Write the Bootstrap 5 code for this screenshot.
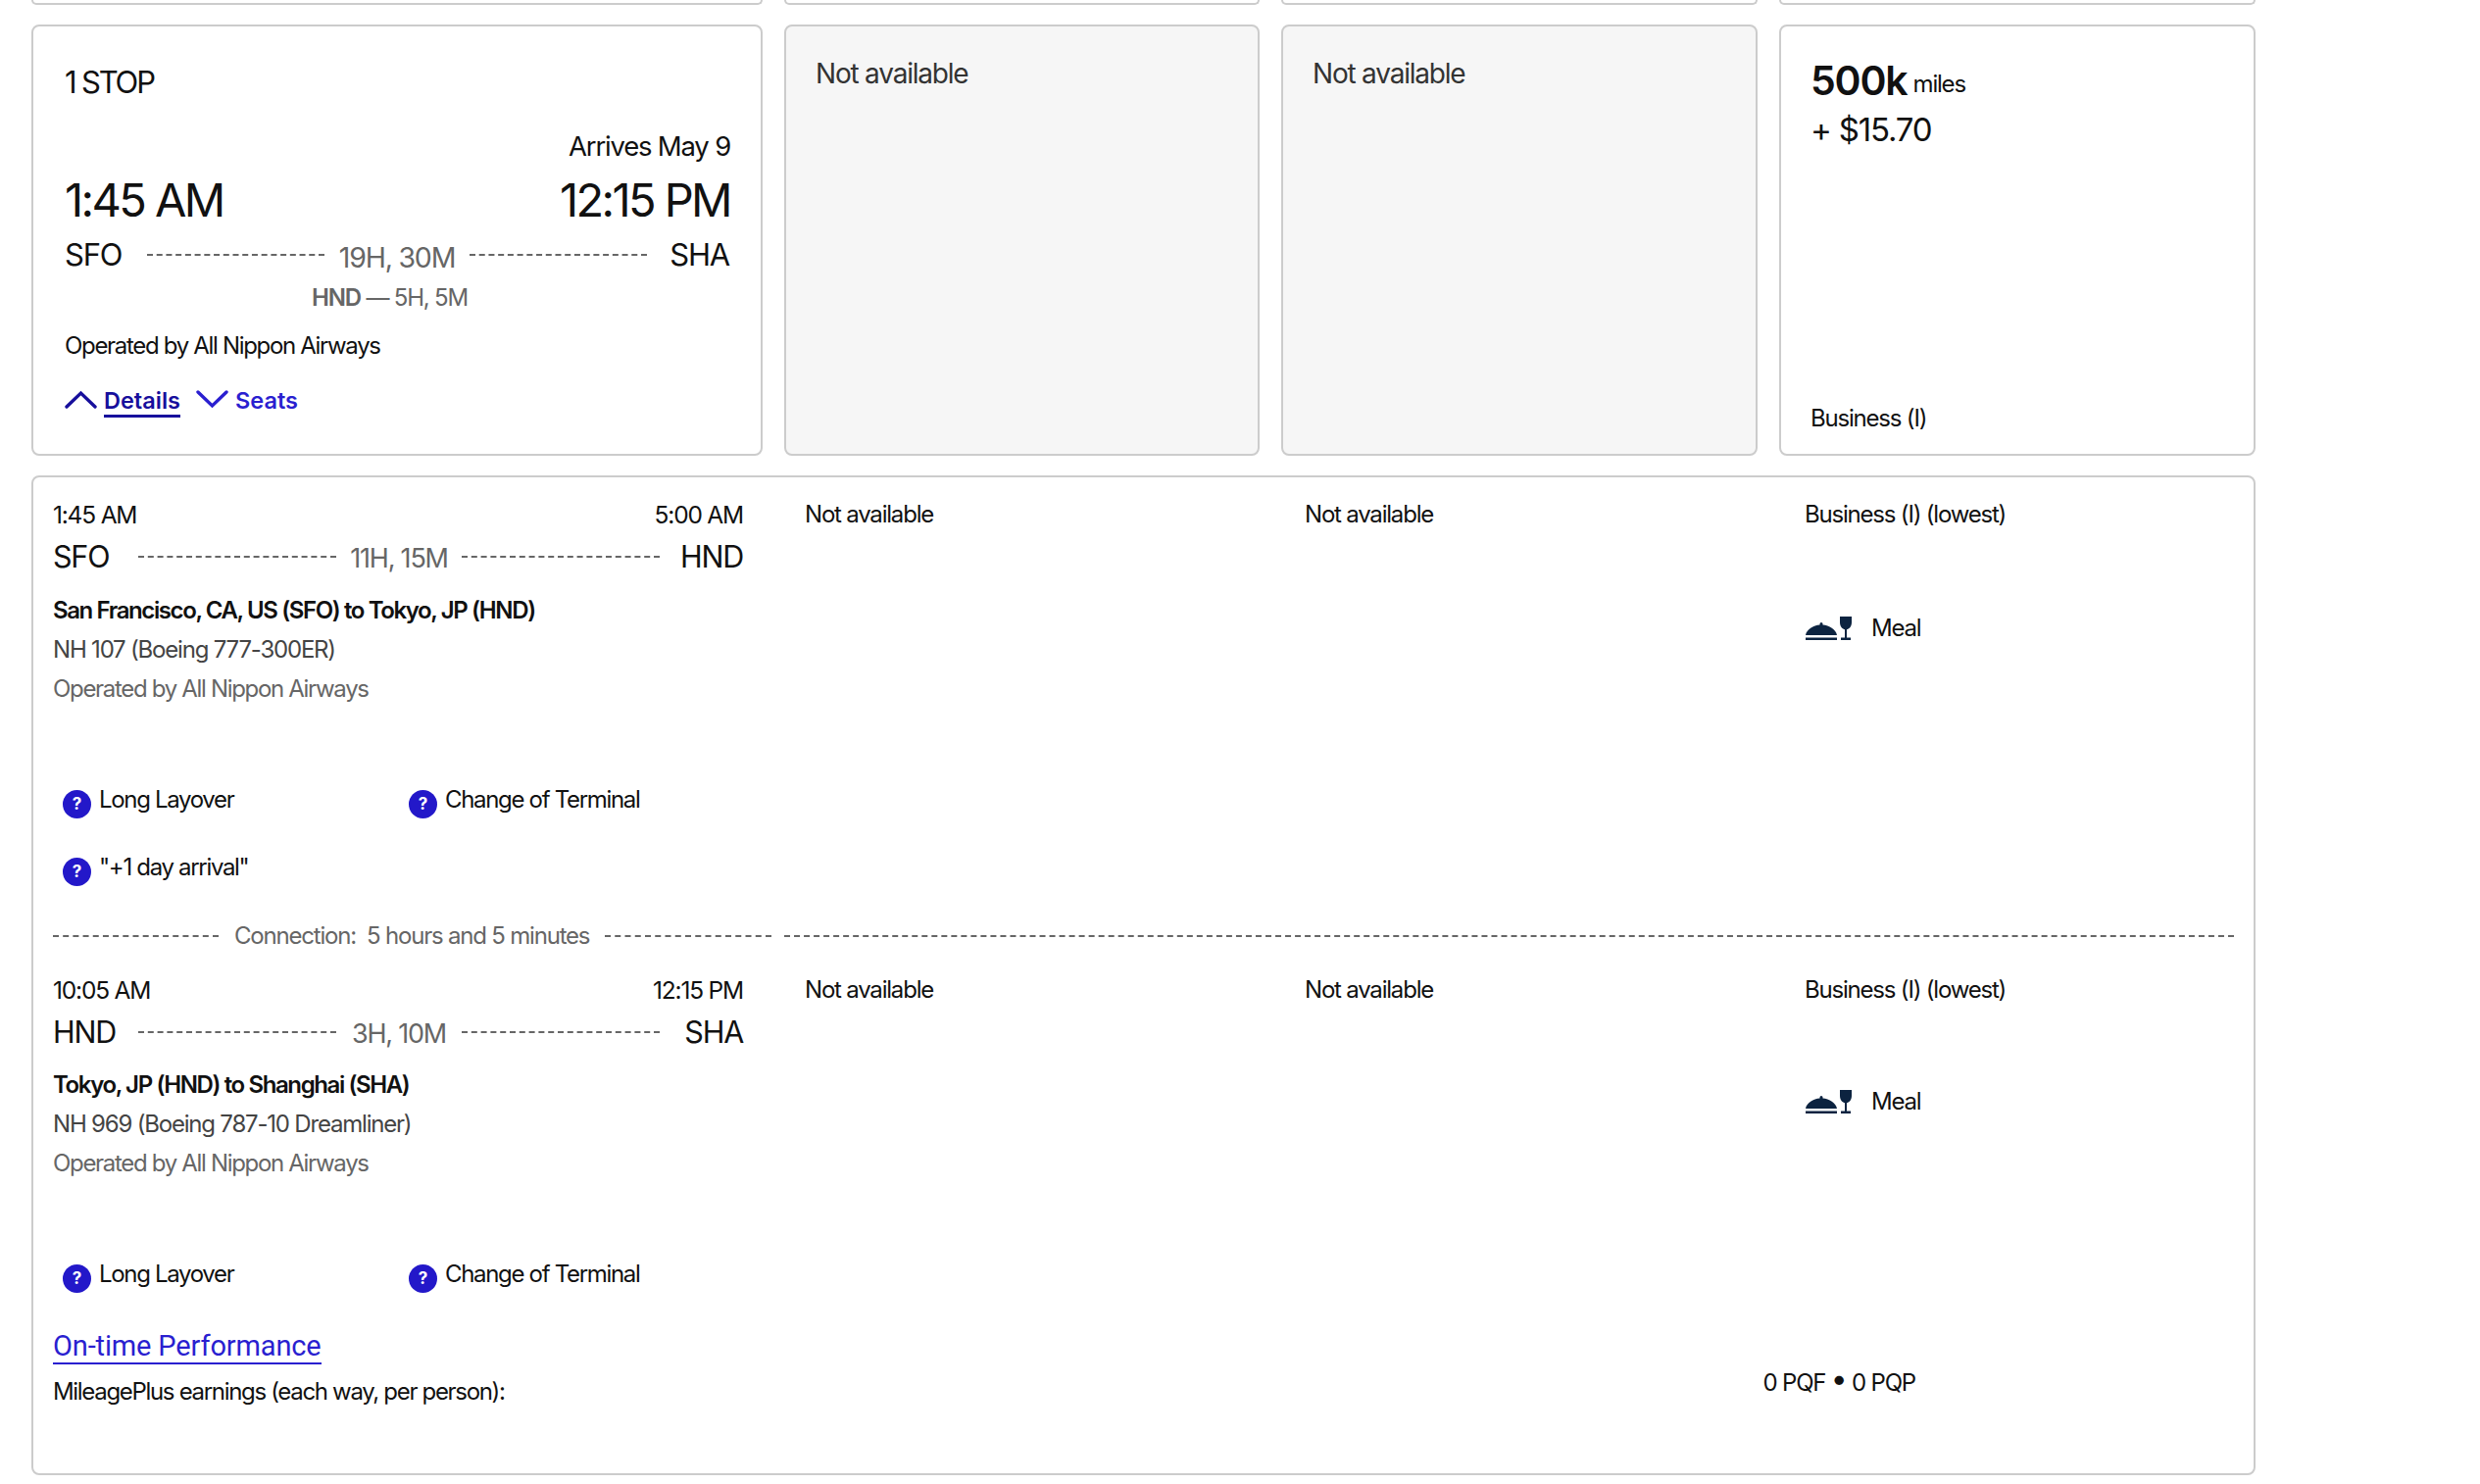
<!DOCTYPE html>
<html lang="en">
<head>
<meta charset="utf-8">
<title>Flight details</title>
<link href="https://cdn.jsdelivr.net/npm/bootstrap@5.3.0/dist/css/bootstrap.min.css" rel="stylesheet">
<style>
body{background:#fff;color:#111;font-family:Inter,"Liberation Sans",sans-serif;font-size:24px;letter-spacing:-.05em;padding:0 0 0 32px;overflow:hidden;line-height:30px}
.fare-grid{display:grid;grid-template-columns:746px 485px 486px 486px;gap:22px;width:2269px}
.fare-main{margin-top:20px}
.stub{height:5px;border:2px solid #ccc;border-top:0;border-radius:0 0 8px 8px}
.tile{height:440px;border:2px solid #ccc;border-radius:8px;background:#fff}
.tile-main{padding:37px 31px 0 32px}
.tile-off{background:#f6f6f6;padding:28px 30px;color:#333;font-size:28px;line-height:40px}
.tile-price{padding:28px 30px 0;justify-content:space-between}
.stop-label{font-size:31px;line-height:40px;letter-spacing:-.07em}
.arrives{font-size:27.500px;line-height:40px;margin-top:25px;text-align:right}
.big-times{font-size:47px;line-height:60px;margin-top:5px;letter-spacing:-.055em}
.route-big{font-size:31px;line-height:40px;margin-top:3px;display:grid;grid-template-columns:84px 181px 148px 181px 84px;align-items:center}
.dash{border-top:2px dashed #666}
.dash-fill{flex:1 1 0}
.dur{color:#666;font-size:28.500px;padding-top:6px;text-align:center}
.via{color:#666;font-size:24px;line-height:30px;margin:6px 0 0 252px}
.via b{font-weight:600}
.op-line{line-height:30px;margin-top:19px;letter-spacing:-.055em}
.links{margin-top:26px;line-height:30px;font-weight:600;font-size:23.500px;letter-spacing:0;gap:7px}
.links a{color:#2a1fd0;text-decoration:none}
.links a.on{color:#170f9c;border-bottom:3px solid #170f9c;height:32px}
.links svg{display:block;margin-top:4px}
.seats-link{margin-left:9px}
.miles-big{font-size:41px;line-height:46px;font-weight:600;margin-top:4px}
.miles-big small{font-size:24px;font-weight:400;margin-left:-3px;vertical-align:3px}
.cash{font-size:33px;line-height:40px;margin-top:3px}
.cabin{line-height:30px;margin-bottom:21px}
.detail-box{border:2px solid #ccc;border-radius:8px;width:2269px;height:1020px;margin-top:20px;padding:23px 0 0 20px}
.seg-grid{display:grid;grid-template-columns:767px 510px 510px 1fr}
.seg-left{padding-right:63px}
.seg-times{font-size:24.500px}
.seg-route{font-size:30.500px;line-height:40px;margin-top:6px;display:grid;grid-template-columns:87px 202px 128px 202px 85px;align-items:center}
.seg-route .dur{font-size:27px;padding-top:4px}
.seg-title{font-weight:600;line-height:40px;margin-top:12.500px;letter-spacing:-.058em}
.seg-plane{color:#444;line-height:40px}
.seg-op{color:#666;line-height:40px;letter-spacing:-.055em}
.flags{margin:78px 0 0 10px;display:grid;grid-template-columns:353px 1fr;row-gap:35px}
.flag{display:flex;gap:8px;letter-spacing:-.055em}
.qmark{width:29px;height:29px;background:#2318c9;color:#fff;font-size:17px;font-weight:700;line-height:1;margin-top:5px;letter-spacing:0}
.meal{margin-top:86px;gap:19px}
.meal svg{margin-left:1px}
.seg-two .meal{margin-top:84px}
.link-row{margin-top:35.500px;line-height:40px}
.ontime{font-family:Roboto,"Liberation Sans",sans-serif;font-size:29px;letter-spacing:-.005em;color:#2a1fd0;text-decoration:none;border-bottom:2px solid #2a1fd0;line-height:36px;display:inline-block;height:37px}
.earn-row{margin-top:10.500px;width:1900px;justify-content:space-between}
.earn-left{letter-spacing:-.055em}
.earn-right{margin-top:-11.500px}
.conn{margin:36px 0 8px;color:#666;height:30px;width:2225px}
.conn-a{flex:0 0 169px}
.conn-b{flex:0 0 170px;margin-right:13px}
.conn-txt{margin:0 16px;white-space:pre}
.seg-two{margin-top:25px}
.raised{font-size:30px;line-height:24px;vertical-align:2px}
</style>
</head>
<body>
<div class="fare-grid">
  <div class="stub"></div><div class="stub"></div><div class="stub"></div><div class="stub"></div>
</div>
<div class="fare-grid fare-main">
  <div class="card tile tile-main">
    <div class="stop-label">1 STOP</div>
    <div class="arrives">Arrives May 9</div>
    <div class="d-flex justify-content-between big-times"><span>1:45 AM</span><span>12:15 PM</span></div>
    <div class="route-big"><span>SFO</span><span class="dash"></span><span class="dur">19H, 30M</span><span class="dash"></span><span class="text-end">SHA</span></div>
    <div class="via"><b>HND</b> — 5H, 5M</div>
    <div class="op-line">Operated by All Nippon Airways</div>
    <div class="d-flex links">
      <svg width="33" height="19" viewBox="0 0 33 19"><path d="M2 17 16.500 3 31 17" fill="none" stroke="#170f9c" stroke-width="3.400" stroke-linecap="round"/></svg>
      <a class="on" href="#">Details</a>
      <svg class="seats-link" width="33" height="19" viewBox="0 0 33 19"><path d="M2 2 16.500 16 31 2" fill="none" stroke="#2a1fd0" stroke-width="3.400" stroke-linecap="round"/></svg>
      <a href="#">Seats</a>
    </div>
  </div>
  <div class="card tile tile-off">Not available</div>
  <div class="card tile tile-off">Not available</div>
  <div class="card tile tile-price">
    <div>
      <div class="miles-big">500k <small>miles</small></div>
      <div class="cash">+ $15.70</div>
    </div>
    <div class="cabin">Business (I)</div>
  </div>
</div>

<div class="detail-box">
  <div class="seg-grid">
    <div class="seg-left">
      <div class="d-flex justify-content-between seg-times"><span>1:45 AM</span><span>5:00 AM</span></div>
      <div class="seg-route"><span>SFO</span><span class="dash"></span><span class="dur">11H, 15M</span><span class="dash"></span><span class="text-end">HND</span></div>
      <div class="seg-title">San Francisco, CA, US (SFO) to Tokyo, JP (HND)</div>
      <div class="seg-plane">NH 107 (Boeing 777-300ER)</div>
      <div class="seg-op">Operated by All Nippon Airways</div>
      <div class="flags">
        <div class="flag"><span class="qmark rounded-circle d-flex align-items-center justify-content-center">?</span><span>Long Layover</span></div>
        <div class="flag"><span class="qmark rounded-circle d-flex align-items-center justify-content-center">?</span><span>Change of Terminal</span></div>
        <div class="flag"><span class="qmark rounded-circle d-flex align-items-center justify-content-center">?</span><span>"+1 day arrival"</span></div>
      </div>
    </div>
    <div>Not available</div>
    <div>Not available</div>
    <div>
      <div>Business (I) (lowest)</div>
      <div class="d-flex align-items-center meal">
        <svg width="48" height="24" viewBox="0 0 48 24"><path d="M0 19C1 13 8 9 14.500 8.500V7.500a1.500 1.500 0 0 1 3 0V8.500C24 9 31 13 32 19ZM0 21.500H32V24H0Z" fill="#0c2340"/><path d="M35 0H47V6C47 10.500 44 12.800 42 13.200V21.500H46V24H36V21.500H40V13.200C38 12.800 35 10.500 35 6Z" fill="#0c2340"/></svg>
        <span>Meal</span>
      </div>
    </div>
  </div>
  <div class="d-flex align-items-center conn"><span class="dash conn-a"></span><span class="conn-txt">Connection:  5 hours and 5 minutes</span><span class="dash conn-b"></span><span class="dash dash-fill"></span></div>
  <div class="seg-grid seg-two">
    <div class="seg-left">
      <div class="d-flex justify-content-between seg-times"><span>10:05 AM</span><span>12:15 PM</span></div>
      <div class="seg-route"><span>HND</span><span class="dash"></span><span class="dur">3H, 10M</span><span class="dash"></span><span class="text-end">SHA</span></div>
      <div class="seg-title">Tokyo, JP (HND) to Shanghai (SHA)</div>
      <div class="seg-plane">NH 969 (Boeing 787-10 Dreamliner)</div>
      <div class="seg-op">Operated by All Nippon Airways</div>
      <div class="flags">
        <div class="flag"><span class="qmark rounded-circle d-flex align-items-center justify-content-center">?</span><span>Long Layover</span></div>
        <div class="flag"><span class="qmark rounded-circle d-flex align-items-center justify-content-center">?</span><span>Change of Terminal</span></div>
      </div>
    </div>
    <div>Not available</div>
    <div>Not available</div>
    <div>
      <div>Business (I) (lowest)</div>
      <div class="d-flex align-items-center meal">
        <svg width="48" height="24" viewBox="0 0 48 24"><path d="M0 19C1 13 8 9 14.500 8.500V7.500a1.500 1.500 0 0 1 3 0V8.500C24 9 31 13 32 19ZM0 21.500H32V24H0Z" fill="#0c2340"/><path d="M35 0H47V6C47 10.500 44 12.800 42 13.200V21.500H46V24H36V21.500H40V13.200C38 12.800 35 10.500 35 6Z" fill="#0c2340"/></svg>
        <span>Meal</span>
      </div>
    </div>
  </div>
  <div class="link-row"><a class="ontime" href="#">On-time Performance</a></div>
  <div class="d-flex earn-row"><span class="earn-left">MileagePlus earnings (each way, per person):</span><span class="earn-right">0 PQF <span class="raised">•</span> 0 PQP</span></div>
</div>
</body>
</html>
